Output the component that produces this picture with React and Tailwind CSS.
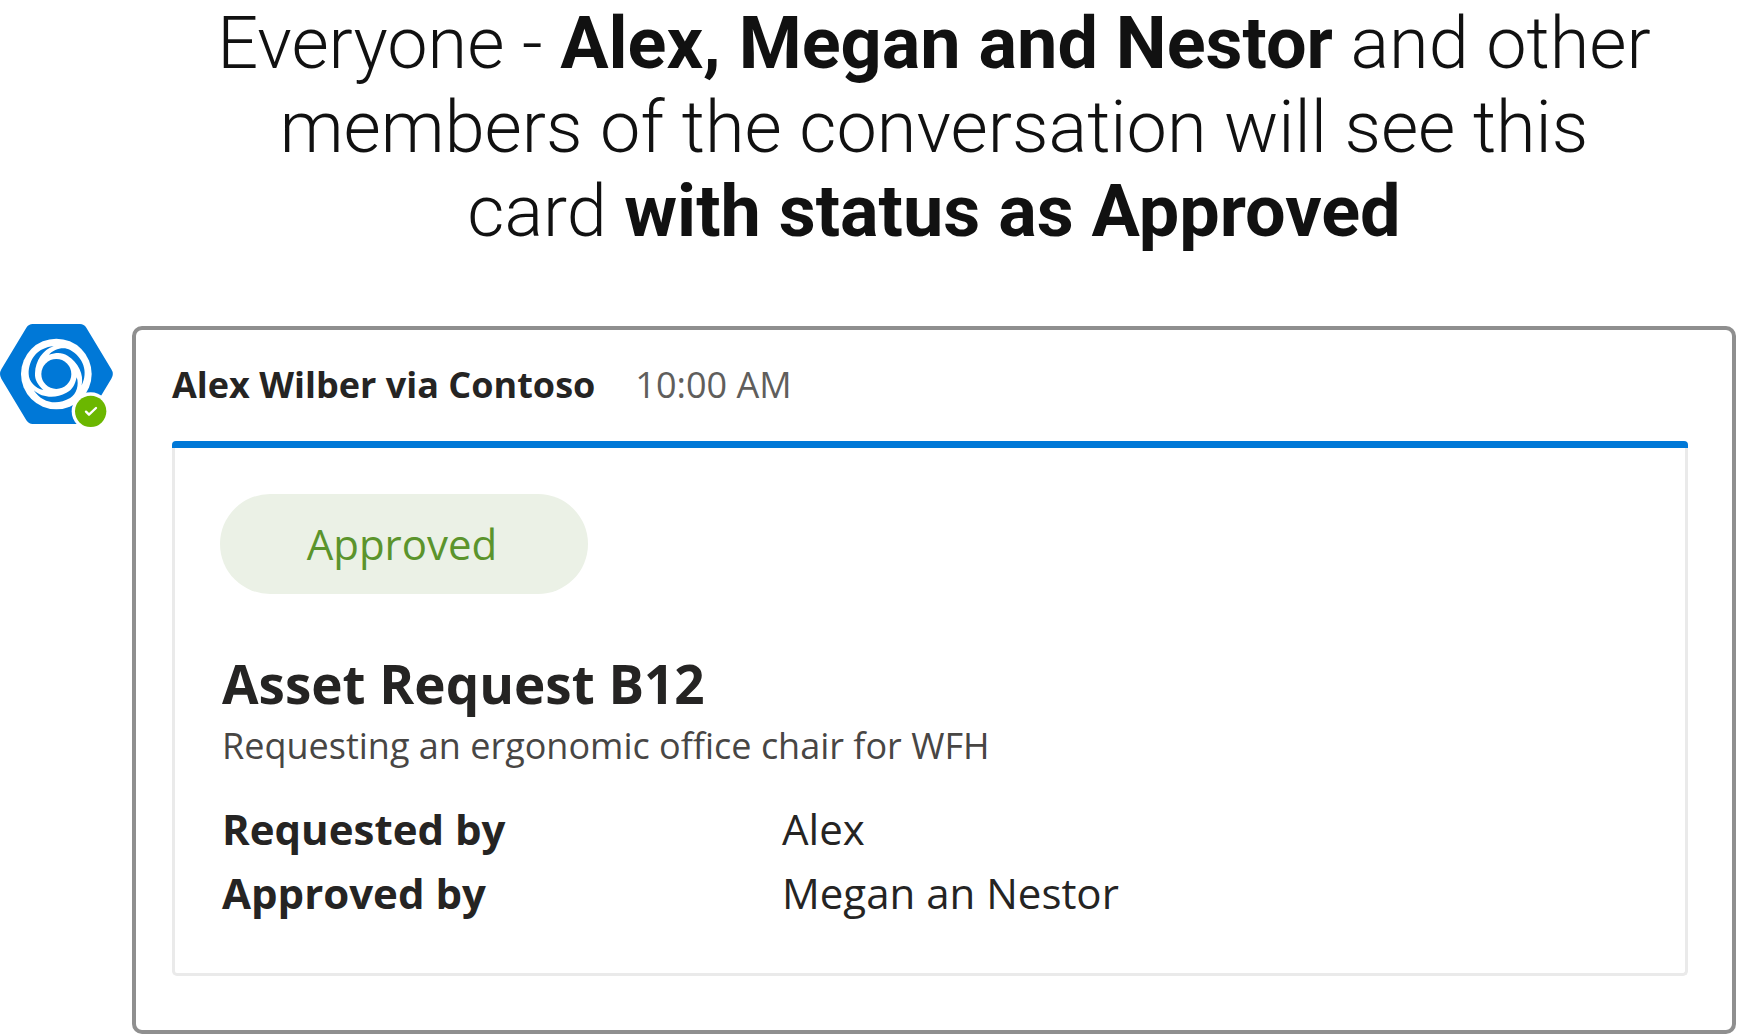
import React from "react";

const facts = [
  { label: "Requested by", value: "Alex" },
  { label: "Approved by", value: "Megan an Nestor" },
];

const crescent =
  "M-8-83C-55-80-83-45-83 0C-83 22-62 44-39 48C-56 32-65 18-64-2C-63-40-40-73-8-83Z";

function Avatar() {
  return (
    <svg
      className="h-[104px] w-[114px] shrink-0"
      viewBox="0 42 342 312"
      role="img"
      aria-label="Contoso, available"
    >
      <path
        d="M98 42H240Q252 42 259 53L334 178Q343 192 334 206L259 331Q252 342 240 342H98Q86 342 79 331L4 206Q-4 192 4 178L79 53Q86 42 98 42Z"
        fill="#0078d7"
      />
      <g transform="translate(169 192)">
        <circle r="106" fill="#fff" />
        <circle r="45" fill="#0078d7" />
        <path d={crescent} fill="#0078d7" />
        <path d={crescent} fill="#0078d7" transform="rotate(120)" />
        <path d={crescent} fill="#0078d7" transform="rotate(240)" />
      </g>
      <circle cx="272" cy="304" r="57" fill="#fff" />
      <circle cx="272" cy="304" r="47" fill="#6bb700" />
      <path
        d="M258 305L267 314L288 294"
        fill="none"
        stroke="#fff"
        strokeWidth="7"
        strokeLinecap="round"
        strokeLinejoin="round"
      />
    </svg>
  );
}

export default function App() {
  return (
    <main className="bg-white pr-6 font-['Open_Sans',sans-serif] text-[#252423]">
      <h1 className="ml-[132px] flex justify-center pt-[2px] font-['Roboto',sans-serif] text-[72px] leading-[84px] font-light text-[#111111]">
        <span className="max-w-[1440px] text-center">
          Everyone - <strong className="font-bold">Alex, Megan and Nestor</strong> and other members of
          the conversation will see this card{" "}
          <strong className="font-bold">with status as Approved</strong>
        </span>
      </h1>

      <div className="mt-[70px] flex items-start gap-[18px]">
        <Avatar />
        <article className="mt-[2px] flex-1 rounded-[10px] border-4 border-[#8f8f8f] pt-[30px] pr-[44px] pb-[54px] pl-9">
          <header className="flex items-baseline gap-10 leading-[50px]">
            <span className="text-[36px] font-bold">Alex Wilber via Contoso</span>
            <time className="text-[36px] text-[#605e5c]">10:00 AM</time>
          </header>

          <section className="mt-[31px]">
            <div className="h-[7px] rounded-t-[4px] bg-[#0078d7]" />
            <div className="rounded-b-[5px] border-x-[3px] border-b-[3px] border-[#eaeaea] bg-white px-[45px] pt-[46px] pb-12">
              <div className="flex h-[100px] w-[368px] items-center justify-center rounded-full bg-[#ebf1e6] pr-1 text-[42px] leading-[56px] text-[#5b942c]">
                Approved
              </div>
              <div className="pl-[2px]">
                <h2 className="mt-[53px] text-[53px] leading-[74px] font-bold">Asset Request B12</h2>
                <p className="text-[36px] leading-[50px] text-[#484644]">
                  Requesting an ergonomic office chair for WFH
                </p>
                <dl className="mt-[26px] text-[42px] leading-[64px]">
                  {facts.map((fact) => (
                    <div key={fact.label} className="flex">
                      <dt className="w-[560px] font-bold">{fact.label}</dt>
                      <dd>{fact.value}</dd>
                    </div>
                  ))}
                </dl>
              </div>
            </div>
          </section>
        </article>
      </div>
    </main>
  );
}
